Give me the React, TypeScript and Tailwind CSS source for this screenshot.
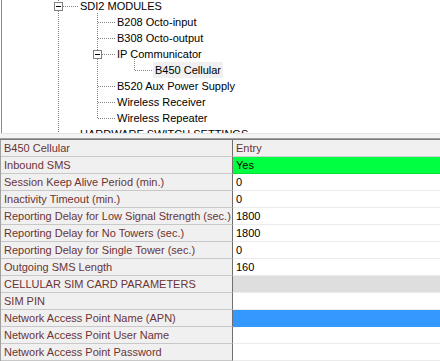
import React from "react";

type TreeRow = { label: string; pad: string; selected?: boolean };

const treeRows: TreeRow[] = [
  { label: "SDI2 MODULES", pad: "pl-[80px]" },
  { label: "B208 Octo-input", pad: "pl-[117px]" },
  { label: "B308 Octo-output", pad: "pl-[117px]" },
  { label: "IP Communicator", pad: "pl-[117px]" },
  { label: "B450 Cellular", pad: "pl-[153px]", selected: true },
  { label: "B520 Aux Power Supply", pad: "pl-[117px]" },
  { label: "Wireless Receiver", pad: "pl-[117px]" },
  { label: "Wireless Repeater", pad: "pl-[117px]" },
  { label: "HARDWARE SWITCH SETTINGS", pad: "pl-[80px]" },
];

type GridRow = { name: string; value: string; kind?: "header" | "green" | "gray" | "blue" };

const gridRows: GridRow[] = [
  { name: "B450 Cellular", value: "Entry", kind: "header" },
  { name: "Inbound SMS", value: "Yes", kind: "green" },
  { name: "Session Keep Alive Period (min.)", value: "0" },
  { name: "Inactivity Timeout (min.)", value: "0" },
  { name: "Reporting Delay for Low Signal Strength (sec.)", value: "1800" },
  { name: "Reporting Delay for No Towers (sec.)", value: "1800" },
  { name: "Reporting Delay for Single Tower (sec.)", value: "0" },
  { name: "Outgoing SMS Length", value: "160" },
  { name: "CELLULAR SIM CARD PARAMETERS", value: "", kind: "gray" },
  { name: "SIM PIN", value: "" },
  { name: "Network Access Point Name (APN)", value: "", kind: "blue" },
  { name: "Network Access Point User Name", value: "" },
  { name: "Network Access Point Password", value: "" },
];

function Dot({ x1, y1, x2, y2 }: { x1: number; y1: number; x2: number; y2: number }) {
  return <line x1={x1} y1={y1} x2={x2} y2={y2} stroke="#808080" strokeWidth={1} strokeDasharray="1 1" />;
}

function Box({ x, y }: { x: number; y: number }) {
  return (
    <g>
      <rect x={x + 0.5} y={y + 0.5} width={8} height={8} fill="#ffffff" stroke="#808080" strokeWidth={1} />
      <rect x={x + 2} y={y + 4} width={5} height={1} fill="#000000" />
    </g>
  );
}

function TreeLines() {
  return (
    <svg className="absolute left-0 top-0" width={440} height={133} viewBox="0 0 440 133">
      <rect x={1} y={0} width={1} height={133} fill="#8a8a8a" />
      {/* level 0 */}
      <Dot x1={58.5} y1={0} x2={58.5} y2={2} />
      <Dot x1={58.5} y1={11} x2={58.5} y2={133} />
      <Dot x1={63} y1={6.5} x2={79} y2={6.5} />
      <Dot x1={59} y1={134.5} x2={79} y2={134.5} />
      <Box x={54} y={2} />
      {/* level 1 */}
      <Dot x1={97.5} y1={13} x2={97.5} y2={50} />
      <Dot x1={97.5} y1={59} x2={97.5} y2={119} />
      <Dot x1={98} y1={22.5} x2={115} y2={22.5} />
      <Dot x1={98} y1={38.5} x2={115} y2={38.5} />
      <Dot x1={102} y1={54.5} x2={115} y2={54.5} />
      <Dot x1={98} y1={86.5} x2={115} y2={86.5} />
      <Dot x1={98} y1={102.5} x2={115} y2={102.5} />
      <Dot x1={98} y1={118.5} x2={115} y2={118.5} />
      <Box x={93} y={50} />
      {/* level 2 */}
      <Dot x1={134.5} y1={59} x2={134.5} y2={70} />
      <Dot x1={135} y1={70.5} x2={152} y2={70.5} />
    </svg>
  );
}

export default function App() {
  return (
    <div
      className="w-[440px] h-[361px] overflow-hidden bg-white text-[11px] text-black"
      style={{ fontFamily: '"Liberation Sans", Arial, sans-serif' }}
    >
      {/* tree */}
      <div className="relative h-[133px] overflow-hidden bg-white">
        <div className="-mt-[2px] flex flex-col">
          {treeRows.map((r) => (
            <div key={r.label} className={`h-[16px] leading-[16px] whitespace-nowrap ${r.pad}`}>
              {r.selected ? (
                <span className="inline-block h-[16px] bg-[#f0f0f0] px-[2px]">{r.label}</span>
              ) : (
                <span>{r.label}</span>
              )}
            </div>
          ))}
        </div>
        <TreeLines />
      </div>

      {/* splitter */}
      <div className="h-[5px] border-t border-[#e3e3e3] bg-[#f4f4f4]" />
      <div className="h-[2px] border-t border-[#a0a0a0] bg-[#7a7a7a]" />

      {/* property grid */}
      <div className="flex flex-col border-l border-[#a0a0a0]">
        {gridRows.map((r) => {
          const right =
            r.kind === "header"
              ? "bg-[#f0f0f0] text-[#6b3434] border-[#d0d0d0]"
              : r.kind === "green"
              ? "bg-[#00ff40] text-black border-[#00e038]"
              : r.kind === "gray"
              ? "bg-[#dedede] border-[#ececec]"
              : r.kind === "blue"
              ? "bg-[#3399ff] border-[#3399ff]"
              : "bg-white text-black border-[#ebebeb]";
          return (
            <div key={r.name} className="flex h-[17px]">
              <div className="w-[232px] shrink-0 h-[17px] leading-[16px] pl-[3px] bg-[#f0f0f0] text-[#6b3434] border-b border-r border-b-[#c8c8c8] border-r-[#6f6f6f] whitespace-nowrap overflow-hidden">
                {r.name}
              </div>
              <div className={`flex-1 h-[17px] leading-[16px] pl-[3px] border-b whitespace-nowrap ${right}`}>
                {r.value}
              </div>
            </div>
          );
        })}
      </div>
    </div>
  );
}
